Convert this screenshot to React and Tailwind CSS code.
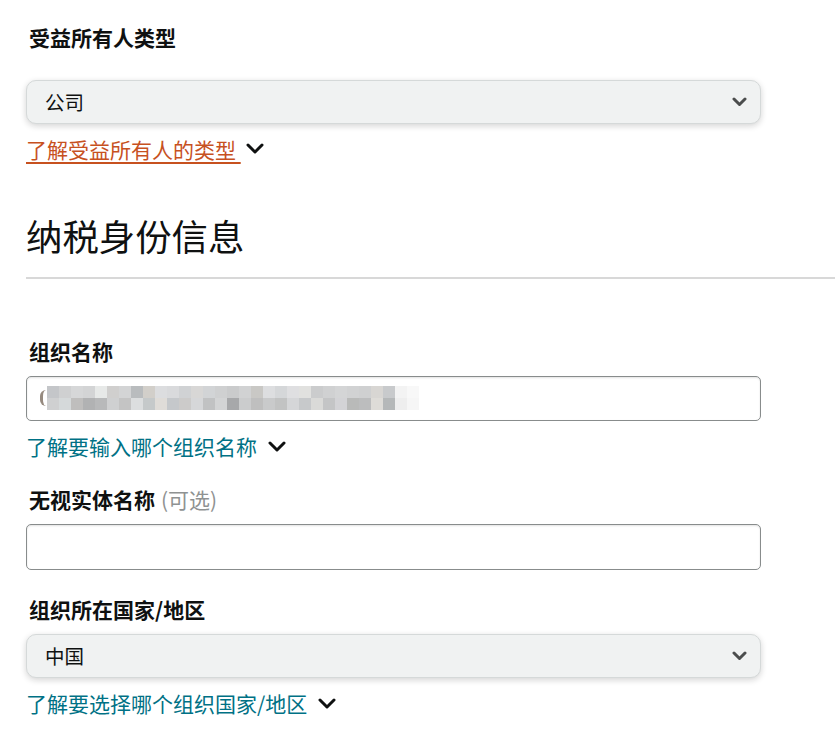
import React from 'react';

const mosaicTop = ['#c4c6c9', '#cfd0d1', '#d6d7d8', '#d3d4d5', '#e7e9e8', '#d0cfce', '#d3d4d5', '#b9bcbe', '#d2cfca', '#dcdddf', '#d9dadc', '#d0d2d4', '#d8d7d6', '#d2d4d6', '#cfd0d1', '#cacbcc', '#d1d2d3', '#c9c8c5', '#dddee0', '#d5d7d9', '#dfdfe1', '#e1e1df', '#cbcccd', '#d0d1d2', '#d4d5d6', '#d1d2d3', '#cfd0d1', '#d8d6d3', '#c8cacc', '#f3f3f3', '#f8f8f8'];
const mosaicBottom = ['#cfd0d1', '#d5d9da', '#bfbebd', '#b1b2b3', '#b8b9ba', '#cfd0d1', '#c4c4c4', '#dcdedf', '#c5c9ca', '#dfdcd8', '#c5c8cb', '#cccbca', '#d6d7d9', '#c1c2c3', '#d3d4d5', '#a7a8aa', '#cbcccd', '#bfbfbf', '#c9cacb', '#c2c3c3', '#d5d6d8', '#c7c9cb', '#dadad8', '#c4c5c6', '#d3d3d6', '#b9bab9', '#bcbdbe', '#dedcd8', '#b5b8b9', '#eeeeee', '#f6f6f6'];

function LinkChevron() {
  return (
    <svg width="18" height="12" viewBox="0 0 18 12" className="shrink-0">
      <polyline points="2,2 9,9 16,2" fill="none" stroke="#0f1111" strokeWidth="3" strokeLinecap="round" strokeLinejoin="round" />
    </svg>
  );
}

function SelectChevron() {
  return (
    <svg width="15" height="10" viewBox="0 0 15 10" className="shrink-0">
      <polyline points="2,2 7.5,7.5 13,2" fill="none" stroke="#4b4d4d" strokeWidth="3" strokeLinecap="round" strokeLinejoin="round" />
    </svg>
  );
}

function Label({ children, extra }) {
  return (
    <div className="pl-[3px] h-[28px] flex items-center text-[21px] font-bold text-[#0f1111]">
      {children}
      {extra && <span className="ml-[6px] font-normal text-[#8f9292]">{extra}</span>}
    </div>
  );
}

function SelectBox({ value }) {
  return (
    <div className="w-[735px] h-[44px] flex items-center justify-between pl-[18px] pr-[13px] bg-[#f0f2f2] border border-[#d5d9d9] rounded-[10px] shadow-[0_2px_6px_rgba(15,17,17,0.18)] text-[19.5px] text-[#0f1111]">
      <span>{value}</span>
      <SelectChevron />
    </div>
  );
}

function HelpLink({ children }) {
  return (
    <div className="h-[28px] flex items-center gap-[11px] text-[21px] text-[#007185]">
      <span>{children}</span>
      <LinkChevron />
    </div>
  );
}

export default function App() {
  return (
    <div className="min-h-screen bg-white pl-[26px] pt-[23px] font-['Noto_Sans_CJK_SC','Noto_Sans',sans-serif] leading-none">
      <Label>受益所有人类型</Label>
      <div className="mt-[29px]">
        <SelectBox value="公司" />
      </div>
      <div className="mt-[11px] h-[28px] flex items-center gap-[5px] text-[21px] text-[#c7511f]">
        <span className="underline decoration-[#c7511f] decoration-2 underline-offset-[4px] whitespace-pre">了解受益所有人的类型 </span>
        <LinkChevron />
      </div>

      <h2 className="mt-[50px] h-[44px] flex items-center text-[36.4px] font-normal text-[#0f1111]">纳税身份信息</h2>
      <div className="mt-[20px] h-[1.5px] bg-[#d8d8d8]" />

      <div className="mt-[59px]">
        <Label>组织名称</Label>
      </div>
      <div className="mt-[10px] w-[735px] h-[45px] flex items-center pl-[13px] bg-white border border-[#888c8c] rounded-[5px] shadow-[inset_0_1px_2px_rgba(15,17,17,0.12)]">
        <div className="w-[6px] h-[16px] mr-[1px] rounded-l-full border-l-[3px] border-[#6b5a4a] opacity-70" />
        <div className="flex flex-col">
          <div className="flex">
            {mosaicTop.map((c, i) => (
              <div key={i} className="w-[12px] h-[12px]" style={{ backgroundColor: c }} />
            ))}
          </div>
          <div className="flex">
            {mosaicBottom.map((c, i) => (
              <div key={i} className="w-[12px] h-[12px]" style={{ backgroundColor: c }} />
            ))}
          </div>
        </div>
      </div>
      <div className="mt-[12px]">
        <HelpLink>了解要输入哪个组织名称</HelpLink>
      </div>

      <div className="mt-[25px]">
        <Label extra="(可选)">无视实体名称</Label>
      </div>
      <div className="mt-[10px] w-[735px] h-[46px] bg-white border border-[#888c8c] rounded-[5px] shadow-[inset_0_1px_2px_rgba(15,17,17,0.12)]" />

      <div className="mt-[26px]">
        <Label>组织所在国家/地区</Label>
      </div>
      <div className="mt-[10px]">
        <SelectBox value="中国" />
      </div>
      <div className="mt-[12px]">
        <HelpLink>了解要选择哪个组织国家/地区</HelpLink>
      </div>
    </div>
  );
}
